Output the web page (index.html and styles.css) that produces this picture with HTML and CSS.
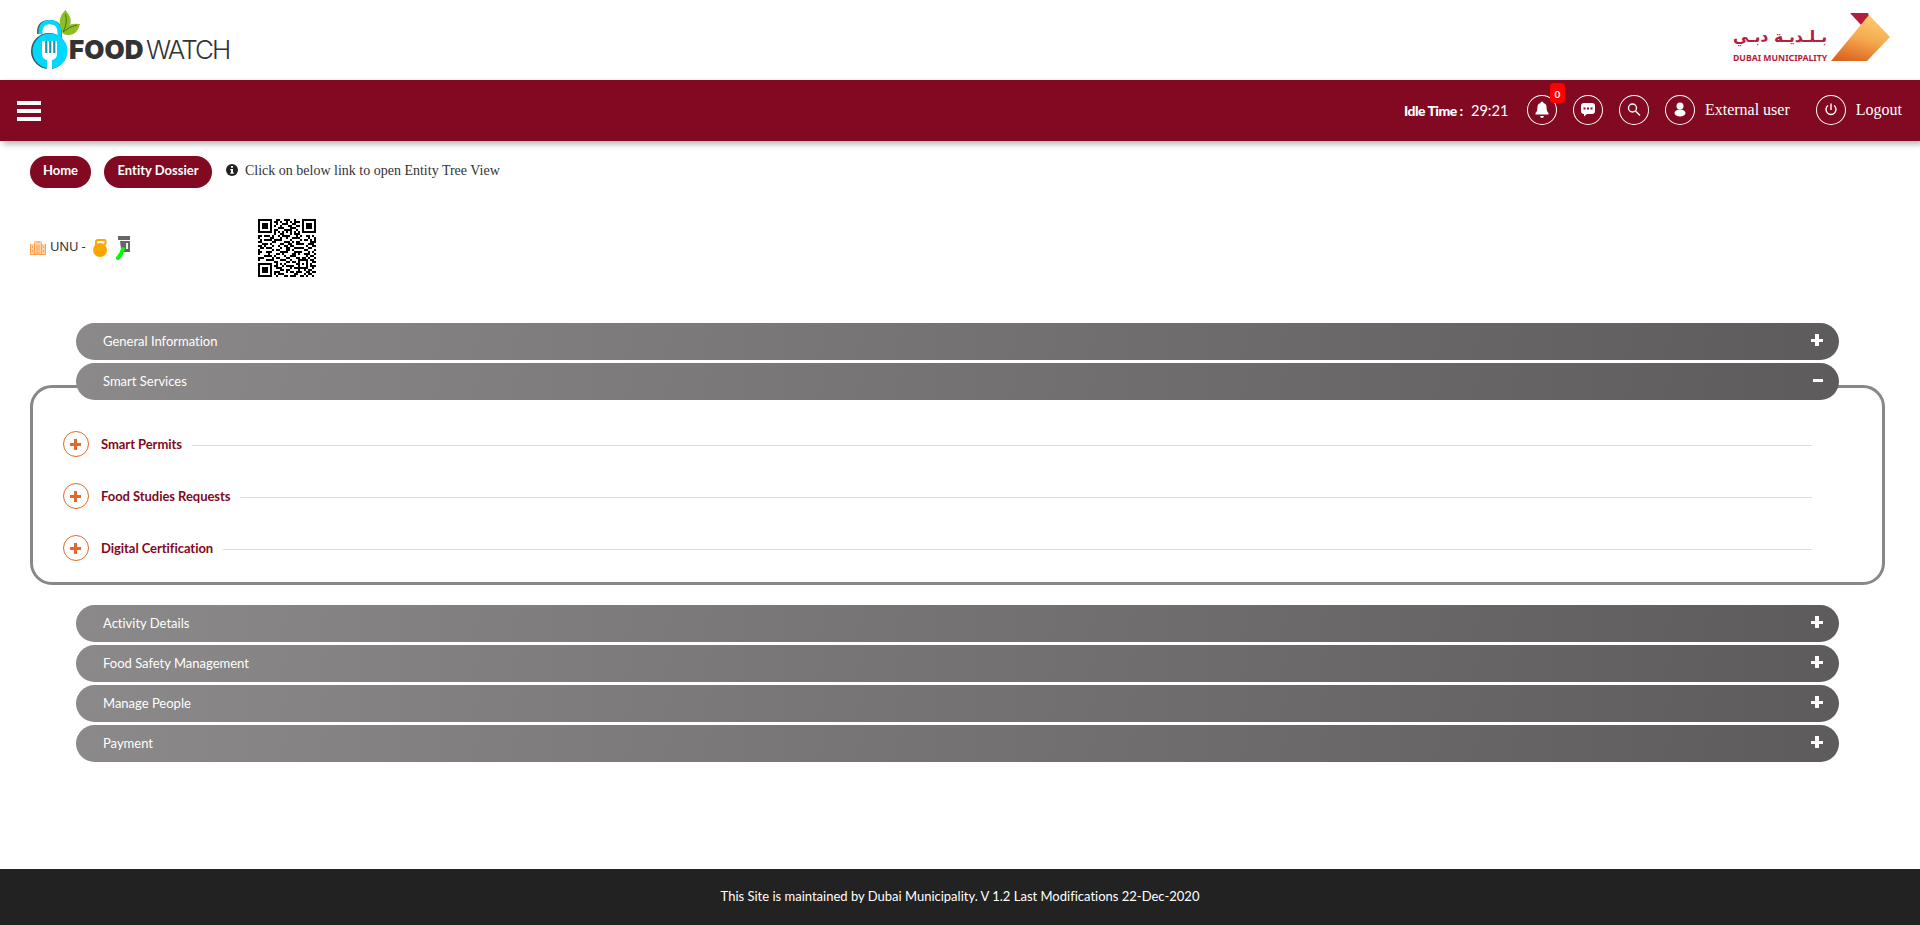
FILE: index.html
```html
<!DOCTYPE html>
<html lang="en">
<head>
<meta charset="utf-8">
<title>Food Watch</title>
<link rel="stylesheet" href="styles.css">
</head>
<body>
<header class="brand-bar">
  <div class="foodwatch">
    <svg class="fw-mark" width="52" height="62" viewBox="0 0 52 62">
      <path d="M8 24V22Q8 12 18.500 12T29 22V28" fill="none" stroke="#466" stroke-width="4"/>
      <circle cx="18" cy="41" r="18" fill="#355"/>
      <path d="M9.500 24V22Q10 12 19 12T28.500 22V28" fill="none" stroke="#00d8ff" stroke-width="4"/>
      <circle cx="19" cy="41" r="17.500" fill="#00d8ff"/>
      <path d="M11 31v13q0 5 5 6v9h5v-9q5-1 5-6V31h-1.500v12h-2V31h-2v12h-2V31h-2v12h-2V31z" fill="#fff"/>
      <path d="M15 31v12M19 31v12M23 31v12" stroke="#355" fill="none"/>
      <path d="M31 21Q25 9 34.500 0Q43 10 38 16Q34 19 32 22z" fill="#8fbd25"/>
      <path d="M31 23Q35 12 49 14Q46 26 37 25Q33 25 31 23z" fill="#8fbd25"/>
      <path d="M32 22Q37 13 34.500 4M32 22Q39 16 46 15" fill="none" stroke="#467514"/>
    </svg>
    <span class="fw-food">FOOD</span><span class="fw-watch">WATCH</span>
  </div>
  <div class="municipality">
    <div class="dm-name"><span class="dm-ar" lang="ar">بـلـديـة دبـي</span><span class="dm-en">DUBAI MUNICIPALITY</span></div>
    <svg width="59" height="48" viewBox="0 0 59 48">
      <defs><linearGradient id="gold" x1=".65" y1="0" x2=".3" y2="1"><stop offset="0" stop-color="#ffcb6b"/><stop offset=".5" stop-color="#f4a94f"/><stop offset="1" stop-color="#dc6421"/></linearGradient></defs>
      <path d="M19 0H37L38 3L30 12z" fill="#b51d3e"/>
      <path d="M38 2L59 24L36 48H0z" fill="url(#gold)"/>
    </svg>
  </div>
</header>
<nav class="top-nav">
  <div class="burger"><i></i><i></i><i></i></div>
  <div class="nav-right">
    <span class="idle-label">Idle Time :</span><span class="idle-time">29:21</span>
    <span class="round bell"><svg width="30" height="30" viewBox="0 0 30 30"><path d="M8.500 19.500V18q2-1.500 2-7Q11 8.500 13.500 8 13.500 6.500 15 6.500T16.500 8Q19 8.500 19.500 11q0 5.500 2 7v1.500zM13 21h4q-.5 2-2 2t-2-2z"/></svg><b class="badge">0</b></span>
    <span class="round"><svg width="30" height="30" viewBox="0 0 30 30"><path d="M11 8h8q3 0 3 3v5q0 3-3 3h-5l-3 2.500V19q-3 0-3-3v-5q0-3 3-3z"/><path class="dots" d="M10.500 12.500h2v2h-2zm3.500 0h2v2h-2zm3.500 0h2v2h-2z"/></svg></span>
    <span class="round"><svg class="line" width="30" height="30" viewBox="0 0 30 30"><circle cx="13.500" cy="13" r="4"/><path d="M16.500 16l4.500 4.500"/></svg></span>
    <span class="round"><svg width="30" height="30" viewBox="0 0 30 30"><circle cx="15" cy="11" r="3.500"/><ellipse cx="15" cy="18" rx="5.500" ry="3.500"/></svg></span>
    <span class="nav-text user">External user</span>
    <span class="round"><svg class="line" width="30" height="30" viewBox="0 0 30 30"><path d="M12 10.500a5 5 0 1 0 6 0M15 8.500V15"/></svg></span>
    <span class="nav-text">Logout</span>
  </div>
</nav>
<main class="content">
  <div class="crumbs">
    <a class="pill home">Home</a><a class="pill dossier">Entity Dossier</a>
    <svg class="info" width="12" height="12" viewBox="0 0 12 12"><circle cx="6" cy="6" r="6"/><path d="M5 2h2v1.700H5zM4.300 5H7v3.500h.8V9.800H4.300V8.500H5V6.200h-.7z" fill="#fff"/></svg>
    <span class="hint">Click on below link to open Entity Tree View</span>
  </div>
  <div class="entity">
    <svg width="16" height="16" viewBox="0 0 16 16"><path d="M0 4h4V1h8v3h4v11H0z" fill="#ffd3a8"/><path d="M6 2h4M4.500 3v12M11.500 3v12M.5 4v11M15.500 4v11M7 5v6M9 5v6M7 15v-3h2v3M2.500 6v2M2.500 10v2M13.500 6v2M13.500 10v2M0 14.500h16" fill="none" stroke="#ffa050"/></svg>
    <span class="entity-name">UNU -</span>
    <svg class="weight" width="15" height="19" viewBox="0 0 15 19"><path d="M3 8V4q0-2 2-2h6q2 0 1.500 3L11 8" fill="none" stroke="#ffa500" stroke-width="2"/><circle cx="7" cy="12" r="7" fill="#ffa500"/></svg>
    <svg class="probe" width="16" height="25" viewBox="0 0 16 25"><path d="M2 0h12v4H2zM4 5h10v11H8L5 13z" fill="#666"/><path d="M10 7h2v6h-2z" fill="#eee"/><path d="M7 13L5 18L2 22" stroke="#0f0" stroke-width="4" stroke-linecap="round" fill="none"/></svg>
    <svg class="qr" id="qr" width="58" height="58" viewBox="0 0 29 29" shape-rendering="crispEdges"></svg>
  </div>
  <div class="accordion">
    <div class="bar"><span>General Information</span><i class="sign plus"></i></div>
    <section class="open">
      <div class="bar"><span>Smart Services</span><i class="sign minus"></i></div>
      <div class="panel">
        <div class="service"><span class="add"></span><b>Smart Permits</b><hr></div>
        <div class="service"><span class="add"></span><b>Food Studies Requests</b><hr></div>
        <div class="service"><span class="add"></span><b>Digital Certification</b><hr></div>
      </div>
    </section>
    <div class="bar"><span>Activity Details</span><i class="sign plus"></i></div>
    <div class="bar"><span>Food Safety Management</span><i class="sign plus"></i></div>
    <div class="bar"><span>Manage People</span><i class="sign plus"></i></div>
    <div class="bar"><span>Payment</span><i class="sign plus"></i></div>
  </div>
</main>
<footer class="footer"><span>This Site is maintained by Dubai Municipality. V 1.2 Last Modifications 22-Dec-2020</span></footer>
<script src="qr.js"></script>
</body>
</html>
```
FILE: styles.css
```css
* { box-sizing: border-box; }
body { margin: 0; height: 925px; display: flex; flex-direction: column; background: #fff; font-family: Lato, "Noto Sans", sans-serif; font-size: 13px; font-variant-ligatures: none; overflow: hidden; }
.brand-bar { height: 80px; flex: none; display: flex; justify-content: space-between; padding: 0 30px 0 31px; }
.foodwatch { display: flex; padding-top: 10px; color: #333; font-family: Inter, sans-serif; line-height: 80px; }
.fw-mark { flex: none; margin-right: -14px; }
.fw-food, .fw-watch { height: 60px; font-size: 26px; line-height: 80px; }
.fw-food { font-weight: 900; width: 77px; letter-spacing: .1px; }
.fw-watch { font-weight: 300; letter-spacing: -1.9px; }
.municipality { display: flex; padding-top: 13px; color: #b51d3e; }
.dm-name { width: 93px; margin-right: 5px; padding-top: 9px; display: flex; flex-direction: column; white-space: nowrap; }
.dm-ar { font: bold 15.800px/30px "DejaVu Sans", sans-serif; height: 30px; }
.dm-en { font: bold 8.700px/12px "Noto Sans", sans-serif; }
.top-nav { height: 61px; flex: none; background: #810921; color: #fff; display: flex; justify-content: space-between; align-items: center; padding: 0 18px 0 17px; box-shadow: 3px 3px 6px rgba(0,0,0,.3); }
.burger { display: flex; flex-direction: column; gap: 4px; }
.burger i { width: 24px; height: 4px; background: #fff; }
.nav-right { display: flex; align-items: center; padding-bottom: 1px; }
.idle-label { width: 60px; margin-right: 7px; font-size: 14px; font-weight: 900; letter-spacing: -.5px; white-space: nowrap; }
.idle-time { font-size: 14.600px; width: 37px; margin-right: 19px; }
.round { position: relative; width: 30px; height: 30px; flex: none; border-radius: 50%; box-shadow: inset 0 0 0 1px #fff; margin-right: 16px; }
.round svg { display: block; fill: #fff; }
.round .dots { fill: #810921; }
.round .line { fill: none; stroke: #fff; stroke-width: 1.400; }
.badge { position: absolute; left: 23px; top: -12px; width: 15px; height: 20px; border-radius: 4px; background: red; font-size: 10px; line-height: 23px; text-align: center; }
.nav-text { font: 16px "Liberation Serif", serif; margin-left: -6px; white-space: nowrap; }
.nav-text.user { margin-right: 26px; }
.content { flex: 1; padding: 15px 35px 0 30px; }
.crumbs { height: 32px; display: flex; align-items: flex-start; }
.pill { height: 32px; border-radius: 16px; background: #810921; color: #fff; font-weight: 700; line-height: 29px; text-align: center; margin-right: 13px; }
.home { width: 61px; }
.dossier { width: 108px; }
.info { margin: 8px 7px 0 1px; fill: #222; }
.hint { font: 14px/29px "Liberation Serif", serif; color: #333; }
.entity { height: 135px; padding-top: 31px; display: flex; align-items: flex-start; }
.entity > svg:first-child { margin-top: 21px; }
.entity-name { margin: 18px 0 0 4px; width: 43px; font: 13px/18px "Noto Sans", sans-serif; letter-spacing: -.2px; white-space: nowrap; color: #333; }
.weight { margin: 19px 0 0; }
.probe { margin: 17px 0 0 8px; }
.qr { margin-left: 126px; }
.accordion { display: flex; flex-direction: column; gap: 3px; }
.bar { height: 37px; margin: 0 46px; flex: none; border-radius: 18.500px; background: linear-gradient(100deg, #8b8989, #5d5b5c); display: flex; align-items: center; justify-content: space-between; padding: 0 16px 0 27px; color: #fff; }
.bar span { padding-bottom: 1px; }
.open { margin-bottom: 17px; display: flex; flex-direction: column; }
.open .bar { z-index: 1; }
.panel { height: 200px; margin-top: -15px; border: 3px solid #888; border-radius: 22px; padding: 43px 70px 0 30px; display: flex; flex-direction: column; gap: 26px; }
.service { height: 26px; display: flex; align-items: center; color: #810921; }
.service b { margin: 0 10px 0 12px; font-weight: 700; letter-spacing: -.05px; white-space: nowrap; }
.service hr { flex: 1; height: 1px; border: 0; background: #ddd; margin: 2px 0 0; }
.add { width: 26px; height: 26px; border: 1px solid #e0692b; border-radius: 50%; background: linear-gradient(#e0692b,#e0692b) 6px 11px/11px 3px no-repeat, linear-gradient(#e0692b,#e0692b) 10px 7px/3px 11px no-repeat; }
.sign { width: 12px; height: 12px; margin-bottom: 3px; background: linear-gradient(#fff,#fff) center/12px 3px no-repeat; }
.plus { background: linear-gradient(#fff,#fff) center/12px 3px no-repeat, linear-gradient(#fff,#fff) center/4px 12px no-repeat; }
.minus { width: 10px; }
.footer { height: 56px; flex: none; background: #222; color: #fff; text-align: center; line-height: 54px; }
```
FILE: qr.js
```javascript
const rows = [
"11111110011001110010001111111","10000010110100101011101000001","10111010010011100110001011101",
"10111010100100011001101011101","10111010001110001110001011101","10000010110001111001001000001",
"11111110101010101010101111111","00000000100110001011100000000","11011101001011110001010011010",
"10000011000100100111100001001","01011110111100001000010110101","11000001100001110101100000111",
"00111010000110011001111001110","11010001001001101100000010011","01101110000100110011111001100",
"10000001011000110100000110001","11001110000111100011110001010","10000100011010000110100111001",
"00011110100001001110000010110","11100001011000110001101101001","10001111000111001000111110110",
"00000000110000110110100010011","11111110010101000001101010100","10000010110010111100100010111",
"10111010011100001011111110010","10111010000110110000100101100","10111010111000101101110011011",
"10000010101110000011000101100","11111110010001101110011010010"];
const path = document.createElementNS("http://www.w3.org/2000/svg", "path");
path.setAttribute("d", rows.map((r, y) => [...r].map((c, x) => c === "1" ? `M${x} ${y}h1v1h-1z` : "").join("")).join(""));
document.getElementById("qr").append(path);
```
